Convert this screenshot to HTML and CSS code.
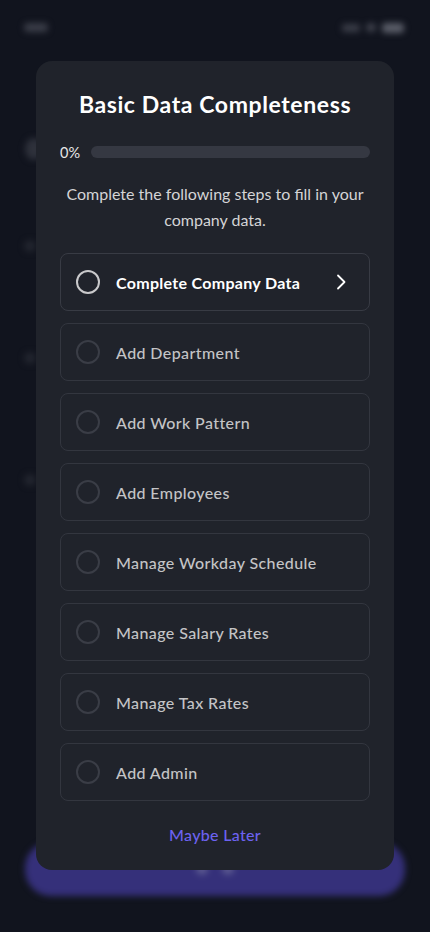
FILE: index.html
```html
<!DOCTYPE html>
<html lang="en">
<head>
<meta charset="utf-8">
<meta name="viewport" content="width=device-width, initial-scale=1">
<title>Basic Data Completeness</title>
<link rel="stylesheet" href="styles.css">
</head>
<body>
<div class="backdrop">
  <div class="status">
    <span class="time"></span>
    <span class="icons"><span class="sig"></span><span class="wifi"></span><span class="bat"></span></span>
  </div>
  <div class="bg-content">
    <div class="bg-avatar"></div>
    <div class="bg-dot d1"></div>
    <div class="bg-dot d2"></div>
    <div class="bg-dot d3"></div>
  </div>
  <div class="bg-button"><span class="bg-btn-dot"></span><span class="bg-btn-dot"></span></div>
</div>

<div class="overlay">
  <section class="modal">
    <h1 class="title">Basic Data Completeness</h1>
    <div class="progress">
      <span class="pct">0%</span>
      <div class="track"><div class="fill" style="width:0%"></div></div>
    </div>
    <p class="desc">Complete the following steps to fill in your company data.</p>
    <ul class="steps">
      <li class="step active"><span class="circle"></span><span class="label">Complete Company Data</span>
        <svg class="chev" width="12" height="18" viewBox="0 0 12 18"><path d="M3 2.5 L9.5 9 L3 15.5" fill="none" stroke="#ffffff" stroke-width="1.8" stroke-linecap="round" stroke-linejoin="round"/></svg>
      </li>
      <li class="step"><span class="circle"></span><span class="label">Add Department</span></li>
      <li class="step"><span class="circle"></span><span class="label">Add Work Pattern</span></li>
      <li class="step"><span class="circle"></span><span class="label">Add Employees</span></li>
      <li class="step"><span class="circle"></span><span class="label">Manage Workday Schedule</span></li>
      <li class="step"><span class="circle"></span><span class="label">Manage Salary Rates</span></li>
      <li class="step"><span class="circle"></span><span class="label">Manage Tax Rates</span></li>
      <li class="step"><span class="circle"></span><span class="label">Add Admin</span></li>
    </ul>
    <button class="later">Maybe Later</button>
  </section>
</div>
</body>
</html>
```
FILE: styles.css
```css
* { box-sizing: border-box; }
html, body { margin: 0; padding: 0; }
body {
  width: 430px;
  height: 932px;
  overflow: hidden;
  background: #11141e;
  font-family: "Lato", "Inter", "Noto Sans", sans-serif;
  color: #fff;
  position: relative;
}
.backdrop {
  height: 932px;
  display: flex;
  flex-direction: column;
  filter: blur(3px);
}
.status {
  display: flex;
  justify-content: space-between;
  align-items: center;
  padding: 15px 26px 0 24px;
  height: 40px;
}
.time { width: 24px; height: 9px; border-radius: 4px; background: #3a3d48; }
.icons { display: flex; gap: 6px; align-items: center; }
.sig { width: 18px; height: 8px; border-radius: 3px; background: #3a3d48; }
.wifi { width: 10px; height: 9px; border-radius: 50%; background: #40434e; }
.bat { width: 22px; height: 10px; border-radius: 4px; background: #5a5d68; }
.bg-content { flex: 1; position: relative; }
.bg-avatar { width: 18px; height: 22px; border-radius: 50%; margin: 98px 0 0 25px; background: #2e313b; }
.bg-dot { width: 12px; height: 12px; border-radius: 50%; background: #22252f; margin-left: 24px; }
.d1 { margin-top: 80px; }
.d2 { margin-top: 100px; }
.d3 { margin-top: 110px; }
.bg-button {
  height: 54px;
  margin: 0 25px 36px;
  border-radius: 26px;
  background: #35307a;
  display: flex;
  justify-content: center;
  align-items: center;
  gap: 14px;
}
.bg-btn-dot { width: 12px; height: 12px; border-radius: 50%; background: #5a5890; }

.overlay {
  position: absolute;
  inset: 0;
  display: flex;
  justify-content: center;
  padding-top: 61px;
}
.modal {
  width: 358px;
  height: 809px;
  background: #20232b;
  border-radius: 16px;
  padding: 28px 24px 0;
  display: flex;
  flex-direction: column;
  align-items: stretch;
}
.title {
  margin: 0;
  font-size: 23px;
  font-weight: 700;
  line-height: 30px;
  text-align: center;
  color: #ffffff;
  letter-spacing: 0.6px;
}
.progress {
  margin-top: 25px;
  display: flex;
  align-items: center;
  gap: 10px;
  height: 16px;
}
.pct { font-size: 14.5px; color: #e6e6e6; width: 21px; }
.track { flex: 1; height: 12px; border-radius: 6px; background: #353842; overflow: hidden; }
.fill { height: 100%; background: #6a5fe8; }
.desc {
  margin: 21px 4px 0;
  font-size: 16px;
  line-height: 26px;
  text-align: center;
  color: #d4d4d6;
}
.steps {
  list-style: none;
  margin: 20px 0 0;
  padding: 0;
  display: flex;
  flex-direction: column;
  gap: 12px;
}
.step {
  height: 58px;
  border: 1px solid #33363f;
  border-radius: 8px;
  display: flex;
  align-items: center;
  padding: 0 22px 0 15px;
  gap: 16px;
}
.circle {
  width: 24px;
  height: 24px;
  border-radius: 50%;
  border: 2px solid #3a3d46;
  flex: none;
}
.label { flex: 1; font-size: 16px; font-weight: 500; color: #c4c4c6; letter-spacing: 0.4px; }
.active { border-color: #383b44; }
.active .circle { border-color: #c9c9cb; }
.active .label { color: #ffffff; font-weight: 700; letter-spacing: 0.3px; }
.chev { flex: none; }
.later {
  margin-top: 24px;
  align-self: center;
  background: none;
  border: none;
  padding: 0;
  font-family: inherit;
  font-size: 16px;
  font-weight: 500;
  color: #6c62f0;
  line-height: 20px;
  letter-spacing: 0.3px;
}
```
